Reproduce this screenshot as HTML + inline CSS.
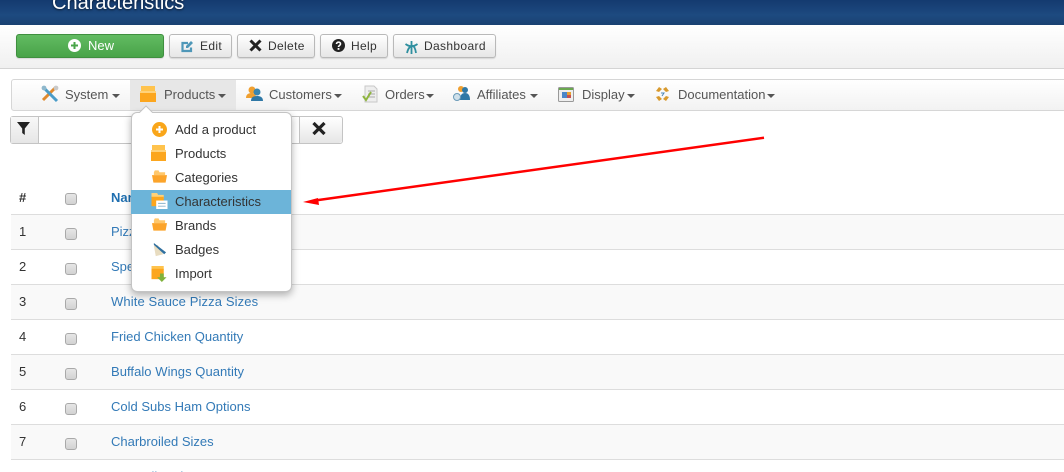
<!DOCTYPE html>
<html><head><meta charset="utf-8">
<style>
html,body{margin:0;padding:0;background:#fff;width:1064px;height:472px;overflow:hidden}
#wrap{position:relative;width:1064px;height:472px;overflow:hidden;font:13px/16px "Liberation Sans",Arial,sans-serif;color:#333}
.a{position:absolute}
.t{position:absolute;white-space:nowrap}
#hd{left:0;top:0;width:1064px;height:25px;background:linear-gradient(#143a6f,#1d4a80 60%,#1a4272)}
#hd span{position:absolute;left:52px;top:-8px;font-size:20px;line-height:22px;color:#fff;text-shadow:0 1px 2px rgba(0,0,0,.6)}
#tb{left:0;top:25px;width:1064px;height:43px;background:linear-gradient(#fff,#f0f0f0);border-bottom:1px solid #d4d4d4}
.btn{position:absolute;top:34px;height:22px;border:1px solid #b9b9b9;border-radius:3px;background:linear-gradient(#fff,#e6e6e6);box-shadow:0 1px 1px rgba(0,0,0,.12);font-size:12px;line-height:22px;color:#333}
.btn span{position:absolute;top:0;white-space:nowrap;letter-spacing:.35px}
.btn svg{position:absolute}
#nav{left:11px;top:79px;width:1060px;height:30px;border:1px solid #d6d6d6;border-radius:3px;background:linear-gradient(#fff,#f2f2f2)}
#act{left:130px;top:80px;width:106px;height:30px;background:#e7e7e7}
.car{position:absolute;width:0;height:0;border-left:4px solid transparent;border-right:4px solid transparent;border-top:4px solid #555;top:94px}
.row{position:absolute;left:11px;width:1053px;height:34px;border-top:1px solid #ddd}
.odd{background:#f9f9f9}
.cb{position:absolute;left:65px;width:10px;height:10px;border:1px solid #a9a9a9;border-radius:3px;background:linear-gradient(#e6e6e6,#d2d2d2)}
.n{position:absolute;left:19px;white-space:nowrap}
.l{position:absolute;left:111px;color:#337ab7;white-space:nowrap}
#dd{left:131px;top:112px;width:159px;height:178px;background:#fff;border:1px solid #c4c4c4;border-radius:6px;box-shadow:0 3px 8px rgba(0,0,0,.3)}
.it{position:absolute;left:175px;white-space:nowrap;color:#333}
</style></head><body><div id="wrap">

<div class="a" id="hd"><span>Characteristics</span></div>
<div class="a" id="tb"></div>

<div class="btn" style="left:16px;width:146px;background:linear-gradient(#62bb62,#48a348);border-color:#3f8f3f;color:#fff">
  <svg style="left:51px;top:4px" width="13" height="13" viewBox="0 0 13 13"><circle cx="6.500" cy="6.500" r="6.500" fill="#fff"/><path d="M6.500 3v7M3 6.500h7" stroke="#4aa54a" stroke-width="2"/></svg>
  <span style="left:71px;font-size:13px;letter-spacing:0">New</span></div>
<div class="btn" style="left:169px;width:61px">
  <svg style="left:11px;top:5px" width="13" height="13" viewBox="0 0 13 13"><path d="M10 7.500V11H1.500V3H7" fill="none" stroke="#4f97b8" stroke-width="2.200"/><path d="M5 6l5-5 2 2-5 5H5z" fill="#4f97b8"/></svg>
  <span style="left:30px">Edit</span></div>
<div class="btn" style="left:237px;width:76px">
  <svg style="left:11px;top:4px" width="13" height="13" viewBox="0 0 13 13"><path d="M1.500 1.500l10 10M11.500 1.500l-10 10" stroke="#222" stroke-width="3"/></svg>
  <span style="left:30px">Delete</span></div>
<div class="btn" style="left:320px;width:66px">
  <svg style="left:11px;top:4px" width="13" height="13" viewBox="0 0 13 13"><circle cx="6.500" cy="6.500" r="6.500" fill="#222"/><path d="M4.500 5c0-2.600 4.200-2.400 4 0 0 1.500-2 1.500-2 3" fill="none" stroke="#fff" stroke-width="1.600"/><rect x="5.600" y="9" width="1.800" height="1.800" fill="#fff"/></svg>
  <span style="left:30px">Help</span></div>
<div class="btn" style="left:393px;width:101px">
  <svg style="left:10px;top:5px" width="15" height="15" viewBox="0 0 15 15"><path d="M7.500 1v13M1.500 4c4 3 8 3 12 0M3 13c1-4 2-6 4.500-7s4 3 4.500 7" fill="none" stroke="#2f8f9f" stroke-width="1.800"/></svg>
  <span style="left:30px">Dashboard</span></div>

<div class="a" id="nav"></div>
<div class="a" id="act"></div>

<svg class="a" style="left:41px;top:85px" width="18" height="18" viewBox="0 0 18 18"><path d="M2 15L14 3" stroke="#e08a2e" stroke-width="3"/><path d="M2 2l14 14" stroke="#4a9cc8" stroke-width="3"/><circle cx="3" cy="3" r="2.400" fill="#8fb8cc"/><circle cx="15" cy="3" r="2.400" fill="#c9c9c9"/></svg>
<div class="t" style="left:65px;top:87px;color:#555">System</div><div class="car" style="left:112px"></div>

<svg class="a" style="left:140px;top:86px" width="16" height="16" viewBox="0 0 16 16"><path d="M1 0h14v5H1z" fill="#ffc34d"/><path d="M0 5h16v11H0z" fill="#fca61e"/><path d="M0 5h16v2H0z" fill="#ffd27a"/></svg>
<div class="t" style="left:164px;top:87px;color:#555">Products</div><div class="car" style="left:218px"></div>

<svg class="a" style="left:246px;top:85px" width="17" height="17" viewBox="0 0 17 17"><circle cx="6" cy="5" r="3.500" fill="#f0a030"/><path d="M0 13c0-4 3-5 6-5s4 2 4 5z" fill="#f0a030"/><circle cx="11" cy="7" r="3.500" fill="#3a86b0"/><path d="M5 16c0-4 3-5 6-5s6 1 6 5z" fill="#2f78a6"/></svg>
<div class="t" style="left:269px;top:87px;color:#555">Customers</div><div class="car" style="left:334px"></div>

<svg class="a" style="left:362px;top:85px" width="16" height="18" viewBox="0 0 16 18"><path d="M3 1h9l3 3v13H3z" fill="#eee" stroke="#c8c8c8"/><path d="M6 6h7M6 9h7M6 12h7" stroke="#aaa"/><path d="M1 11l3 4 5-8" fill="none" stroke="#8fb53f" stroke-width="2"/></svg>
<div class="t" style="left:385px;top:87px;color:#555">Orders</div><div class="car" style="left:426px"></div>

<svg class="a" style="left:453px;top:85px" width="17" height="17" viewBox="0 0 17 17"><circle cx="8" cy="4" r="3" fill="#f0a030"/><circle cx="12" cy="5" r="3" fill="#2f78a6"/><path d="M7 15c0-5 2-7 5-7s5 2 5 7z" fill="#2f78a6"/><circle cx="4" cy="12" r="3.500" fill="#cfe0ea" stroke="#6a9ab8"/></svg>
<div class="t" style="left:477px;top:87px;color:#555">Affiliates</div><div class="car" style="left:530px"></div>

<svg class="a" style="left:558px;top:87px" width="16" height="15" viewBox="0 0 16 15"><rect x=".5" y=".5" width="15" height="14" rx="1" fill="#eee" stroke="#999"/><rect x="1" y="1" width="14" height="2" fill="#6aa84f"/><rect x="4" y="5" width="5" height="6" fill="#4a86c8"/><rect x="9" y="5" width="4" height="3" fill="#e6a030"/><rect x="9" y="8" width="4" height="3" fill="#c85050"/></svg>
<div class="t" style="left:582px;top:87px;color:#555">Display</div><div class="car" style="left:627px"></div>

<svg class="a" style="left:656px;top:87px" width="13" height="14" viewBox="0 0 13 14"><path d="M0 4l3-4 3 2-3 3zM13 4L10 0 7 2l3 3zM0 10l3 4 3-2-3-3zM13 10l-3 4-3-2 3-3z" fill="#d89a2e"/><path d="M5 6h3l-2 3" fill="none" stroke="#4a86b8"/></svg>
<div class="t" style="left:678px;top:87px;color:#555">Documentation</div><div class="car" style="left:767px"></div>

<!-- filter -->
<div class="a" style="left:10px;top:116px;width:331px;height:26px;border:1px solid #c4c4c4;border-radius:3px;background:#fff"></div>
<div class="a" style="left:11px;top:117px;width:27px;height:26px;background:linear-gradient(#f8f8f8,#e6e6e6);border-right:1px solid #c4c4c4"></div>
<svg class="a" style="left:17px;top:122px" width="13" height="13" viewBox="0 0 15 13" preserveAspectRatio="none"><path d="M0 0h15L9 6.500V13L6 11V6.500z" fill="#222"/></svg>
<div class="a" style="left:299px;top:117px;width:42px;height:26px;background:linear-gradient(#fff,#e6e6e6);border-left:1px solid #c4c4c4;border-radius:0 3px 3px 0"></div>
<svg class="a" style="left:312px;top:122px" width="14" height="13" viewBox="0 0 14 13"><path d="M1.500 1l11 11M12.500 1l-11 11" stroke="#222" stroke-width="3.200"/></svg>

<!-- table -->
<div class="n" style="left:19px;top:190px;font-weight:bold">#</div>
<div class="cb" style="top:193px"></div>
<div class="l" style="top:190px;font-weight:bold;color:#1f6fb0">Name</div>

<div class="row odd" style="top:214px"></div>
<div class="row" style="top:249px"></div>
<div class="row odd" style="top:284px"></div>
<div class="row" style="top:319px"></div>
<div class="row odd" style="top:354px"></div>
<div class="row" style="top:389px"></div>
<div class="row odd" style="top:424px"></div>
<div class="row" style="top:459px"></div>

<div class="n" style="top:224px">1</div><div class="cb" style="top:228px"></div><div class="l" style="top:224px">Pizza Sizes</div>
<div class="n" style="top:259px">2</div><div class="cb" style="top:263px"></div><div class="l" style="top:259px">Specialty Pizza Sizes</div>
<div class="n" style="top:294px">3</div><div class="cb" style="top:298px"></div><div class="l" style="top:294px;letter-spacing:.12px">White Sauce Pizza Sizes</div>
<div class="n" style="top:329px">4</div><div class="cb" style="top:333px"></div><div class="l" style="top:329px">Fried Chicken Quantity</div>
<div class="n" style="top:364px">5</div><div class="cb" style="top:368px"></div><div class="l" style="top:364px;letter-spacing:.05px">Buffalo Wings Quantity</div>
<div class="n" style="top:399px">6</div><div class="cb" style="top:403px"></div><div class="l" style="top:399px">Cold Subs Ham Options</div>
<div class="n" style="top:434px">7</div><div class="cb" style="top:438px"></div><div class="l" style="top:434px">Charbroiled Sizes</div>
<div class="n" style="top:469px">8</div><div class="l" style="top:469px">BBQ Ribs Sizes</div>

<!-- dropdown -->
<div class="a" id="dd"></div>
<svg class="a" style="left:139px;top:105px" width="16" height="8" viewBox="0 0 16 8"><path d="M0 8L7 1l7 7" fill="#fff" stroke="#c4c4c4"/></svg>
<div class="a" style="left:131px;top:190px;width:160px;height:24px;background:#6cb4d9"></div>

<svg class="a" style="left:152px;top:122px" width="15" height="15" viewBox="0 0 15 15"><circle cx="7.500" cy="7.500" r="7.500" fill="#f9a61a"/><path d="M7.500 4v7M4 7.500h7" stroke="#fff" stroke-width="2"/></svg>
<svg class="a" style="left:151px;top:145px" width="15" height="16" viewBox="0 0 15 16"><path d="M1 0h13v5H1z" fill="#ffc34d"/><path d="M0 5h15v11H0z" fill="#fca61e"/><path d="M0 5h15v2H0z" fill="#ffd27a"/></svg>
<svg class="a" style="left:152px;top:170px" width="15" height="13" viewBox="0 0 16 13"><path d="M2 2l1-2h4l1 2h6v3H2z" fill="#ffc76a"/><path d="M0 5h16l-1.500 8h-13z" fill="#fca42a"/></svg>
<svg class="a" style="left:151px;top:193px" width="17" height="16" viewBox="0 0 17 17"><path d="M0 0h6l1 2h6v4H0z" fill="#ffd27a"/><path d="M0 4h13v10H0z" fill="#fca61e"/><rect x="5" y="8" width="12" height="9" fill="#fff"/><path d="M7 11h8M7 14h8" stroke="#8ab4cc"/></svg>
<svg class="a" style="left:152px;top:218px" width="15" height="13" viewBox="0 0 16 13"><path d="M2 2l1-2h4l1 2h6v3H2z" fill="#ffc76a"/><path d="M0 5h16l-1.500 8h-13z" fill="#fca42a"/></svg>
<svg class="a" style="left:152px;top:242px" width="15" height="15" viewBox="0 0 16 16"><path d="M2 4l4-1 6 10-8 2z" fill="#e8dcc0"/><path d="M2 1l13 10-2 2L2 3z" fill="#2f6f9f"/></svg>
<svg class="a" style="left:151px;top:266px" width="17" height="16" viewBox="0 0 17 17"><path d="M0 0h13v4H0z" fill="#ffc34d"/><path d="M0 3h13v11H0z" fill="#fca61e"/><path d="M9 8h4v4h3l-5 5-5-5h3z" fill="#7fb23c"/></svg>

<div class="it" style="top:122px">Add a product</div>
<div class="it" style="top:146px">Products</div>
<div class="it" style="top:170px">Categories</div>
<div class="it" style="top:194px">Characteristics</div>
<div class="it" style="top:218px">Brands</div>
<div class="it" style="top:242px">Badges</div>
<div class="it" style="top:266px">Import</div>

<!-- arrow -->
<svg class="a" style="left:0;top:0" width="1064" height="472" viewBox="0 0 1064 472"><path d="M764 137.700L315 200.500" stroke="#f00" stroke-width="2.500" fill="none"/><path d="M303 202l15-4 1 7z" fill="#f00"/></svg>

</div></body></html>
